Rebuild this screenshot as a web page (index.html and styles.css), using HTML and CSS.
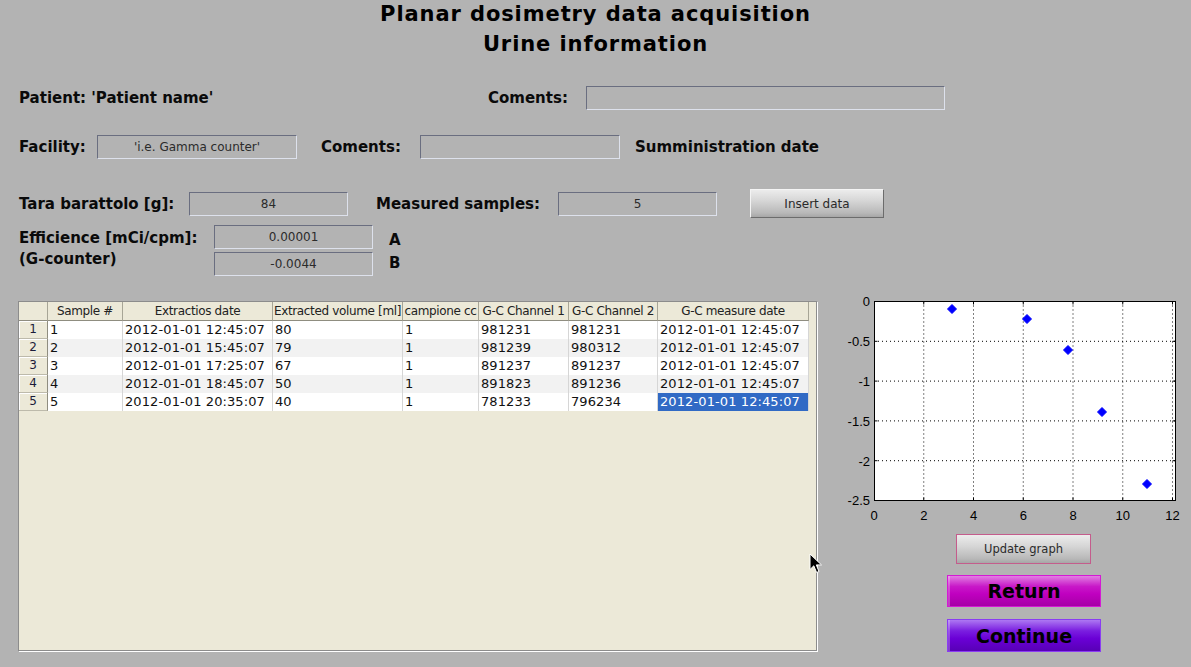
FILE: index.html
```html
<!DOCTYPE html>
<html>
<head>
<meta charset="utf-8">
<title>Planar dosimetry data acquisition</title>
<link rel="stylesheet" href="styles.css">
</head>
<body>
<div class="page">
  <header class="title">
    <div>Planar dosimetry data acquisition</div>
    <div>Urine information</div>
  </header>

  <div class="row r1">
    <span class="lbl w-patient">Patient: 'Patient name'</span>
    <span class="lbl w-com1">Coments:</span>
    <span class="field f-com1"></span>
  </div>

  <div class="row r2">
    <span class="lbl w-fac">Facility:</span>
    <span class="field f-fac">'i.e. Gamma counter'</span>
    <span class="lbl w-com2">Coments:</span>
    <span class="field f-com2"></span>
    <span class="lbl">Sumministration date</span>
  </div>

  <div class="row r3">
    <span class="lbl w-tara">Tara barattolo [g]:</span>
    <span class="field f-num">84</span>
    <span class="lbl w-meas">Measured samples:</span>
    <span class="field f-num">5</span>
    <button class="btn-gray btn-insert">Insert data</button>
  </div>

  <div class="row r4">
    <div class="lbl eff-lbl">
      <div>Efficience [mCi/cpm]:</div>
      <div>(G-counter)</div>
    </div>
    <div class="eff-fields">
      <span class="field f-num">0.00001</span>
      <span class="field f-num">-0.0044</span>
    </div>
    <div class="lbl ab">
      <div>A</div>
      <div>B</div>
    </div>
  </div>

  <div class="bottom">
    <div class="panel">
      <div class="grid">
        <div class="hc"></div>
        <div class="hc">Sample #</div>
        <div class="hc">Extractios date</div>
        <div class="hc">Extracted volume [ml]</div>
        <div class="hc">campione cc</div>
        <div class="hc">G-C Channel 1</div>
        <div class="hc">G-C Channel 2</div>
        <div class="hc">G-C measure date</div>

        <div class="rh">1</div>
        <div class="c">1</div><div class="c">2012-01-01 12:45:07</div><div class="c">80</div><div class="c">1</div><div class="c">981231</div><div class="c">981231</div><div class="c">2012-01-01 12:45:07</div>

        <div class="rh">2</div>
        <div class="c alt">2</div><div class="c alt">2012-01-01 15:45:07</div><div class="c alt">79</div><div class="c alt">1</div><div class="c alt">981239</div><div class="c alt">980312</div><div class="c alt">2012-01-01 12:45:07</div>

        <div class="rh">3</div>
        <div class="c">3</div><div class="c">2012-01-01 17:25:07</div><div class="c">67</div><div class="c">1</div><div class="c">891237</div><div class="c">891237</div><div class="c">2012-01-01 12:45:07</div>

        <div class="rh">4</div>
        <div class="c alt">4</div><div class="c alt">2012-01-01 18:45:07</div><div class="c alt">50</div><div class="c alt">1</div><div class="c alt">891823</div><div class="c alt">891236</div><div class="c alt">2012-01-01 12:45:07</div>

        <div class="rh">5</div>
        <div class="c">5</div><div class="c">2012-01-01 20:35:07</div><div class="c">40</div><div class="c">1</div><div class="c">781233</div><div class="c">796234</div><div class="c sel">2012-01-01 12:45:07</div>
      </div>
    </div>

    <div class="side">
      <svg class="chart" width="355" height="230" viewBox="0 0 355 230">
        <rect x="39" y="6.5" width="302" height="199" fill="#fff"/>
        <g stroke="#000" stroke-width="1" stroke-dasharray="1 3" fill="none">
          <line x1="88.75" y1="6.5" x2="88.75" y2="205.5"/>
          <line x1="138.5" y1="6.5" x2="138.5" y2="205.5"/>
          <line x1="188.25" y1="6.5" x2="188.25" y2="205.5"/>
          <line x1="238" y1="6.5" x2="238" y2="205.5"/>
          <line x1="287.75" y1="6.5" x2="287.75" y2="205.5"/>
          <line x1="337.5" y1="6.5" x2="337.5" y2="205.5"/>
          <line x1="39" y1="46.3" x2="341" y2="46.3"/>
          <line x1="39" y1="86.1" x2="341" y2="86.1"/>
          <line x1="39" y1="125.9" x2="341" y2="125.9"/>
          <line x1="39" y1="165.7" x2="341" y2="165.7"/>
        </g>
        <g stroke="#000" stroke-width="1" fill="none">
          <rect x="39.5" y="6.5" width="301" height="199"/>
          <path d="M88.75 205.5v-3M138.5 205.5v-3M188.25 205.5v-3M238 205.5v-3M287.75 205.5v-3M337.5 205.5v-3M88.75 6.5v3M138.5 6.5v3M188.25 6.5v3M238 6.5v3M287.75 6.5v3M337.5 6.5v3M39.5 46.3h3M39.5 86.1h3M39.5 125.9h3M39.5 165.7h3M340.5 46.3h-3M340.5 86.1h-3M340.5 125.9h-3M340.5 165.7h-3"/>
        </g>
        <g class="ax" text-anchor="end">
          <text x="35" y="11">0</text>
          <text x="35" y="51">-0.5</text>
          <text x="35" y="91">-1</text>
          <text x="35" y="130.5">-1.5</text>
          <text x="35" y="170.5">-2</text>
          <text x="35" y="210">-2.5</text>
        </g>
        <g class="ax" text-anchor="middle">
          <text x="39" y="224.5">0</text>
          <text x="88.75" y="224.5">2</text>
          <text x="138.5" y="224.5">4</text>
          <text x="188.25" y="224.5">6</text>
          <text x="238" y="224.5">8</text>
          <text x="287.75" y="224.5">10</text>
          <text x="337.5" y="224.5">12</text>
        </g>
        <g fill="#0000ff" stroke="#0000ff" stroke-width="1">
          <path d="M117 9.5l4.5 4.5-4.5 4.5-4.5-4.5z"/>
          <path d="M192 19.5l4.5 4.5-4.5 4.5-4.5-4.5z"/>
          <path d="M233 50.5l4.5 4.5-4.5 4.5-4.5-4.5z"/>
          <path d="M267 112.5l4.5 4.5-4.5 4.5-4.5-4.5z"/>
          <path d="M312 184.5l4.5 4.5-4.5 4.5-4.5-4.5z"/>
        </g>
      </svg>
      <button class="btn-gray btn-update">Update graph</button>
      <button class="btn-big btn-return">Return</button>
      <button class="btn-big btn-continue">Continue</button>
    </div>
  </div>
</div>

<svg class="cursor" width="14" height="22" viewBox="0 0 14 22">
  <path d="M1 1 L1 16.5 L4.8 12.8 L7.6 19.5 L10 18.5 L7.3 11.9 L12.5 11.9 Z" fill="#000" stroke="#fff" stroke-width="1" stroke-linejoin="miter"/>
</svg>
</body>
</html>
```

FILE: styles.css
```css
html, body {
  margin: 0;
  padding: 0;
}

body {
  width: 1191px;
  height: 667px;
  overflow: hidden;
  background: #b3b3b3;
  font-family: "DejaVu Sans", Verdana, sans-serif;
  color: #000;
  position: relative;
}

.page {
  padding-left: 19px;
}

.title {
  margin-top: -1px;
  margin-left: -19px;
  text-align: center;
  font-weight: bold;
  font-size: 21px;
  letter-spacing: 0.9px;
  line-height: 30px;
  color: #000;
}

.row {
  display: flex;
  align-items: center;
}

.r1 { margin-top: 27px; height: 24px; }
.r2 { margin-top: 25px; height: 24px; }
.r3 { margin-top: 30px; height: 29px; }
.r4 { margin-top: 7px; height: 51px; align-items: flex-start; }

.lbl {
  font-weight: bold;
  font-size: 15px;
  white-space: nowrap;
  color: #0a0a0a;
}

.w-patient { width: 469px; }
.w-com1 { width: 98px; }
.w-fac { width: 78px; }
.w-com2 { width: 99px; margin-left: 24px; }
.w-tara { width: 170px; }
.w-meas { width: 182px; margin-left: 28px; }

.field {
  display: block;
  box-sizing: border-box;
  height: 24px;
  border: 1px solid;
  border-color: #6a6e80 #dde1ec #dde1ec #6a6e80;
  text-align: center;
  font-size: 12px;
  line-height: 22px;
  color: #2b2b2b;
  white-space: nowrap;
  overflow: hidden;
}

.f-com1 { width: 359px; }
.f-fac { width: 200px; }
.f-com2 { width: 200px; margin-right: 15px; }
.f-num { width: 159px; }

button {
  font-family: "DejaVu Sans", Verdana, sans-serif;
  padding: 0;
  cursor: default;
}

.btn-gray {
  box-sizing: border-box;
  font-size: 12px;
  color: #2a2a2a;
  background: linear-gradient(#ececec, #d6d6d6 40%, #b8b8b8 85%, #a6a6a6);
}

.btn-insert {
  width: 134px;
  height: 29px;
  margin-left: 33px;
  border: 1px solid;
  border-color: #f4f4f4 #6c6c6c #6c6c6c #f4f4f4;
}

.eff-lbl {
  width: 195px;
  padding-top: 3px;
  line-height: 21px;
}

.eff-fields {
  display: flex;
  flex-direction: column;
  gap: 3px;
}

.ab {
  margin-left: 16px;
  padding-top: 4px;
  line-height: 23px;
}

.bottom {
  margin-top: 25px;
  margin-left: -1px;
  display: flex;
  align-items: flex-start;
}

.panel {
  box-sizing: border-box;
  width: 799px;
  height: 350px;
  border: 1px solid #8c8c8c;
  box-shadow: 1px 1px 0 #ffffff;
  background: #ece9d8;
}

.grid {
  display: grid;
  grid-template-columns: 29px 75px 150px 130px 76px 90px 89px 151px;
  grid-template-rows: 19px repeat(5, 18px);
  width: 790px;
  font-size: 12px;
}

.hc {
  box-sizing: border-box;
  background: #ece9d8;
  border-right: 1px solid #a7a596;
  border-bottom: 1px solid #8f8d80;
  text-align: center;
  line-height: 18px;
  white-space: nowrap;
  overflow: hidden;
  color: #222;
  letter-spacing: -0.35px;
}

.rh {
  box-sizing: border-box;
  background: #ece9d8;
  border-right: 1px solid #8f8d80;
  border-bottom: 1px solid #bdbaab;
  box-shadow: inset 1px 1px 0 #ffffff;
  text-align: center;
  line-height: 17px;
  color: #1b1b3a;
}

.c {
  box-sizing: border-box;
  background: #ffffff;
  border-right: 1px solid #d6d6d6;
  padding-left: 2px;
  font-size: 13px;
  letter-spacing: 0.1px;
  line-height: 18px;
  white-space: nowrap;
  overflow: hidden;
  color: #111;
}

.c.alt {
  background: #f2f2f2;
}

.c.sel {
  background: #316ac5;
  color: #ffffff;
}

.side {
  margin-top: -6px;
  margin-left: 18px;
  width: 355px;
  display: flex;
  flex-direction: column;
  align-items: flex-start;
}

.chart {
  display: block;
}

.ax {
  font-family: "Liberation Sans", Arial, sans-serif;
  font-size: 13px;
  fill: #000;
}

.btn-update {
  width: 135px;
  height: 30px;
  margin-top: 9px;
  margin-left: 121px;
  border: 1px solid #c45c8c;
  font-size: 11.5px;
}

.btn-big {
  box-sizing: border-box;
  width: 154px;
  margin-left: 112px;
  font-weight: bold;
  font-size: 19px;
  color: #000;
}

.btn-return {
  height: 32px;
  margin-top: 11px;
  border: 1px solid #d41ad4;
  background: linear-gradient(#e27ee2, #c818c8 35%, #c000c0 60%, #a600a6);
  box-shadow: inset 2px 0 0 rgba(255,255,255,0.25);
}

.btn-continue {
  height: 33px;
  margin-top: 12px;
  border: 1px solid #8a3cf2;
  background: linear-gradient(#ad78f2, #7a1ee0 35%, #6a00d6 60%, #5800b6);
  box-shadow: inset 2px 0 0 rgba(255,255,255,0.25);
}

.cursor {
  position: absolute;
  left: 809px;
  top: 553px;
}
```
